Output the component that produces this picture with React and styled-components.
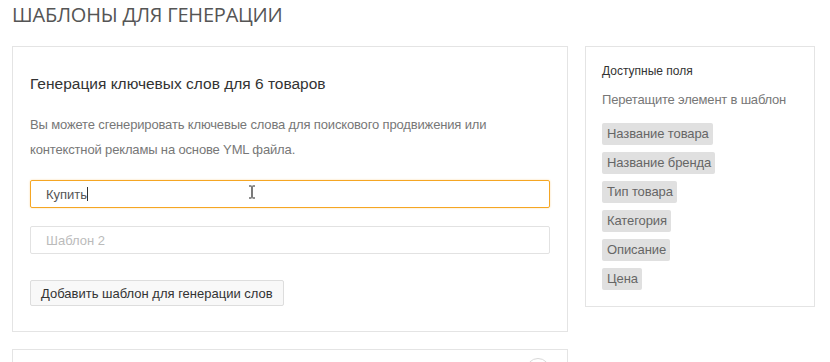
import React from "react";
import styled, { createGlobalStyle } from "styled-components";

const Global = createGlobalStyle`
  html, body { margin: 0; padding: 0; background: #fff; }
  body { font-family: "Liberation Sans", Arial, sans-serif; }
  * { box-sizing: border-box; }
`;

const Page = styled.div`
  padding: 1px 15px 0 12px;
  width: 830px;
  height: 362px;
  overflow: hidden;
  position: relative;
`;

const Heading = styled.h1`
  margin: 0 0 17px;
  font-family: "Open Sans", sans-serif;
  font-weight: 400;
  font-size: 20px;
  line-height: 28px;
  color: #555;
  letter-spacing: -0.2px;
`;

const Columns = styled.div`
  display: flex;
  align-items: flex-start;
  gap: 17px;
`;

const MainCol = styled.div`
  width: 556px;
  display: flex;
  flex-direction: column;
  gap: 17px;
`;

const Card = styled.section`
  background: #fff;
  border: 1px solid #e4e4e4;
  padding: ${(p) => p.$pad || "27px 17px 25px"};
`;

const CardTitle = styled.h2`
  margin: 0 0 18px;
  font-size: 15.5px;
  line-height: 20px;
  font-weight: 400;
  color: #333;
`;

const Desc = styled.p`
  margin: 0 0 18px;
  font-size: 13px;
  line-height: 25px;
  letter-spacing: -0.15px;
  color: #777;
`;

const Field = styled.div`
  height: 28px;
  border: 1px solid ${(p) => (p.$focused ? "#f5a623" : "#e2e2e2")};
  box-shadow: ${(p) => (p.$focused ? "0 0 2px rgba(245,166,35,0.45)" : "none")};
  border-radius: 2px;
  padding: 0 15px;
  display: flex;
  align-items: center;
  font-size: 13px;
  color: ${(p) => (p.$placeholder ? "#bbb" : "#555")};
  margin-bottom: ${(p) => p.$mb || "18px"};
`;

const Caret = styled.span`
  display: inline-block;
  width: 1px;
  height: 14px;
  background: #333;
  margin-left: 0;
`;

const Button = styled.button`
  height: 26px;
  padding: 0 10px;
  border: 1px solid #ddd;
  border-radius: 2px;
  background: #f8f8f8;
  font-family: "Liberation Sans", Arial, sans-serif;
  font-size: 13px;
  color: #333;
  cursor: pointer;
`;

const Side = styled.aside`
  width: 230px;
  background: #fff;
  border: 1px solid #e4e4e4;
  padding: 16px;
`;

const SideTitle = styled.h3`
  margin: 0 0 13px;
  font-size: 12px;
  line-height: 16px;
  font-weight: 400;
  color: #333;
`;

const SideHint = styled.p`
  margin: 0 0 15px;
  font-size: 13px;
  line-height: 16px;
  letter-spacing: -0.2px;
  color: #777;
`;

const Tags = styled.div`
  display: flex;
  flex-direction: column;
  align-items: flex-start;
  gap: 7px;
`;

const Tag = styled.span`
  height: 22px;
  line-height: 22px;
  padding: 0 4px 0 5px;
  background: #e0e0e0;
  border-radius: 2px;
  font-size: 13px;
  letter-spacing: -0.1px;
  color: #666;
  cursor: move;
`;

const BottomHead = styled.div`
  display: flex;
  justify-content: flex-end;
`;

const Circle = styled.span`
  width: 24px;
  height: 24px;
  border-radius: 50%;
  border: 1px solid #d8d8d8;
  display: block;
`;

const Cursor = styled.svg`
  position: absolute;
  left: 248px;
  top: 185px;
  pointer-events: none;
`;

const fields = [
  "Название товара",
  "Название бренда",
  "Тип товара",
  "Категория",
  "Описание",
  "Цена",
];

export default function App() {
  return (
    <>
      <Global />
      <Page>
        <Heading>ШАБЛОНЫ ДЛЯ ГЕНЕРАЦИИ</Heading>
        <Columns>
          <MainCol>
            <Card>
              <CardTitle>Генерация ключевых слов для 6 товаров</CardTitle>
              <Desc>
                Вы можете сгенерировать ключевые слова для поискового продвижения или
                <br />
                контекстной рекламы на основе YML файла.
              </Desc>
              <Field $focused>
                Купить
                <Caret />
              </Field>
              <Field $placeholder $mb="26px">
                Шаблон 2
              </Field>
              <Button>Добавить шаблон для генерации слов</Button>
            </Card>
            <Card $pad="8px 17px 17px">
              <BottomHead>
                <Circle />
              </BottomHead>
            </Card>
          </MainCol>
          <Side>
            <SideTitle>Доступные поля</SideTitle>
            <SideHint>Перетащите элемент в шаблон</SideHint>
            <Tags>
              {fields.map((f) => (
                <Tag key={f}>{f}</Tag>
              ))}
            </Tags>
          </Side>
        </Columns>
        <Cursor width="8" height="14" viewBox="0 0 8 14">
          <path d="M1 1h2.5M4.5 1H7M4 1.5v11M1 13h2.5M4.5 13H7" stroke="#222" strokeWidth="1.2" fill="none" />
        </Cursor>
      </Page>
    </>
  );
}
